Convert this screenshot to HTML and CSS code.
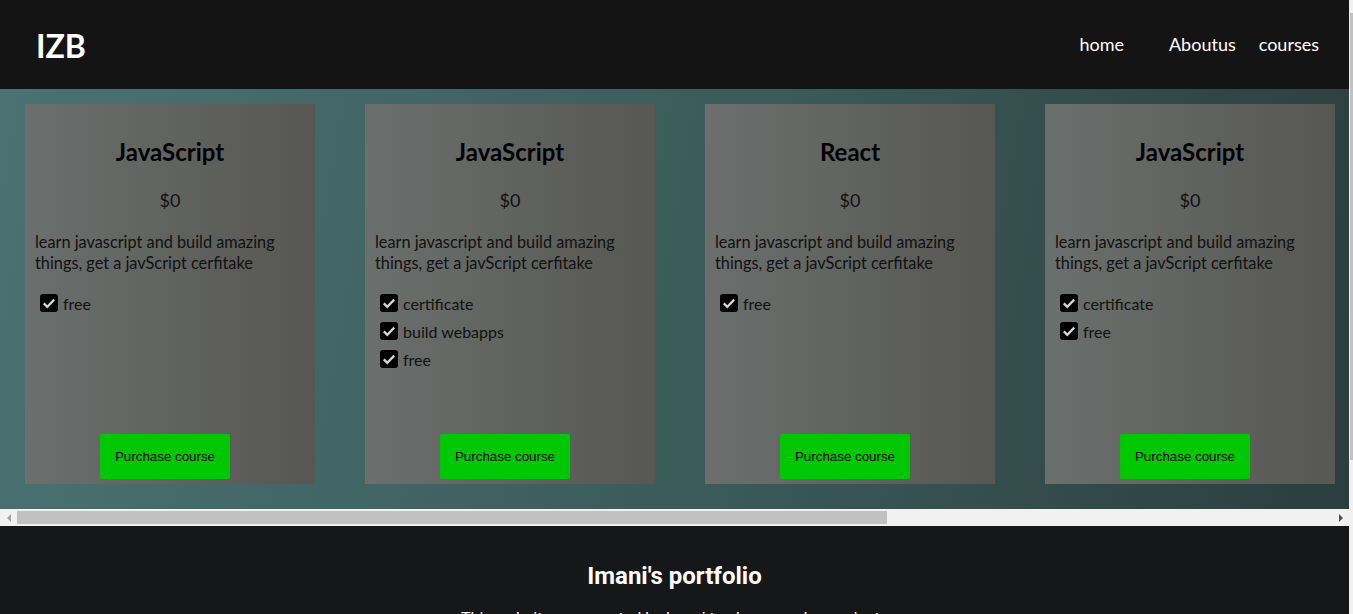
FILE: index.html
```html
<!DOCTYPE html>
<html lang="en">
<head>
<meta charset="utf-8">
<title>IZB</title>
<link rel="stylesheet" href="styles.css">
</head>
<body>
<div class="page">
  <header class="topbar">
    <div class="logo">IZB</div>
    <nav class="nav">
      <a class="nav-link nav-home" href="#">home</a>
      <a class="nav-link" href="#">Aboutus</a>
      <a class="nav-link" href="#">courses</a>
    </nav>
  </header>

  <section class="courses">
    <div class="track">
      <article class="card">
        <h2 class="card-title">JavaScript</h2>
        <div class="price">$0</div>
        <p class="desc">learn javascript and build amazing things, get a javScript cerfitake</p>
        <ul class="features">
          <li class="feature"><svg class="check" width="18" height="18" viewBox="0 0 18 18"><rect width="18" height="18" rx="3" fill="#000"/><path d="M3.8 9.4 L7.3 12.8 L14.2 5.6" fill="none" stroke="#d4d4d4" stroke-width="2.3"/></svg>free</li>
        </ul>
        <button class="buy">Purchase course</button>
      </article>
      <article class="card">
        <h2 class="card-title">JavaScript</h2>
        <div class="price">$0</div>
        <p class="desc">learn javascript and build amazing things, get a javScript cerfitake</p>
        <ul class="features">
          <li class="feature"><svg class="check" width="18" height="18" viewBox="0 0 18 18"><rect width="18" height="18" rx="3" fill="#000"/><path d="M3.8 9.4 L7.3 12.8 L14.2 5.6" fill="none" stroke="#d4d4d4" stroke-width="2.3"/></svg>certificate</li>
          <li class="feature"><svg class="check" width="18" height="18" viewBox="0 0 18 18"><rect width="18" height="18" rx="3" fill="#000"/><path d="M3.8 9.4 L7.3 12.8 L14.2 5.6" fill="none" stroke="#d4d4d4" stroke-width="2.3"/></svg>build webapps</li>
          <li class="feature"><svg class="check" width="18" height="18" viewBox="0 0 18 18"><rect width="18" height="18" rx="3" fill="#000"/><path d="M3.8 9.4 L7.3 12.8 L14.2 5.6" fill="none" stroke="#d4d4d4" stroke-width="2.3"/></svg>free</li>
        </ul>
        <button class="buy">Purchase course</button>
      </article>
      <article class="card">
        <h2 class="card-title">React</h2>
        <div class="price">$0</div>
        <p class="desc">learn javascript and build amazing things, get a javScript cerfitake</p>
        <ul class="features">
          <li class="feature"><svg class="check" width="18" height="18" viewBox="0 0 18 18"><rect width="18" height="18" rx="3" fill="#000"/><path d="M3.8 9.4 L7.3 12.8 L14.2 5.6" fill="none" stroke="#d4d4d4" stroke-width="2.3"/></svg>free</li>
        </ul>
        <button class="buy">Purchase course</button>
      </article>
      <article class="card">
        <h2 class="card-title">JavaScript</h2>
        <div class="price">$0</div>
        <p class="desc">learn javascript and build amazing things, get a javScript cerfitake</p>
        <ul class="features">
          <li class="feature"><svg class="check" width="18" height="18" viewBox="0 0 18 18"><rect width="18" height="18" rx="3" fill="#000"/><path d="M3.8 9.4 L7.3 12.8 L14.2 5.6" fill="none" stroke="#d4d4d4" stroke-width="2.3"/></svg>certificate</li>
          <li class="feature"><svg class="check" width="18" height="18" viewBox="0 0 18 18"><rect width="18" height="18" rx="3" fill="#000"/><path d="M3.8 9.4 L7.3 12.8 L14.2 5.6" fill="none" stroke="#d4d4d4" stroke-width="2.3"/></svg>free</li>
        </ul>
        <button class="buy">Purchase course</button>
      </article>
    </div>
  </section>

  <div class="hscroll">
    <div class="hs-btn"><span class="arrow-left"></span></div>
    <div class="hs-track"><div class="hs-thumb"></div></div>
    <div class="hs-btn"><span class="arrow-right"></span></div>
  </div>

  <footer class="footer">
    <h2 class="footer-title">Imani's portfolio</h2>
    <p class="footer-text">This website was created by Imani to showcase her projects</p>
  </footer>
</div>
<div class="vscroll"><div class="vs-thumb"></div></div>
</body>
</html>
```

FILE: styles.css
```css
* { box-sizing: border-box; }

html, body {
  margin: 0;
  height: 614px;
  overflow: hidden;
}

body {
  display: flex;
  background: #151719;
  font-family: Lato, "Noto Sans", sans-serif;
}

.page {
  flex: 0 0 1349px;
  width: 1349px;
  display: flex;
  flex-direction: column;
  overflow: hidden;
}

.vscroll {
  flex: 0 0 4px;
  background: #f1f1f1;
  padding-top: 13px;
  padding-left: 1px;
}

.vs-thumb {
  height: 447px;
  background: #c1c1c1;
}

/* header */
.topbar {
  flex: 0 0 89px;
  height: 89px;
  background: #141414;
  display: flex;
  align-items: center;
  justify-content: space-between;
  padding: 0 30px 0 36px;
}

.logo {
  color: #fff;
  font-size: 32px;
  font-weight: 700;
  line-height: 1;
  margin-top: 2px;
}

.nav {
  display: flex;
  gap: 23px;
  margin-bottom: 1px;
}

.nav-link {
  color: #fff;
  text-decoration: none;
  font-size: 18px;
}

.nav-home {
  margin-right: 22px;
}

/* courses */
.courses {
  flex: 0 0 420px;
  height: 420px;
  overflow: hidden;
  background: linear-gradient(100deg, #4a7272 0%, #3b5a5a 55%, #2c3e3e 100%);
}

.track {
  display: flex;
  gap: 50px;
  padding: 15px 25px 25px;
}

.card {
  flex: 0 0 290px;
  width: 290px;
  height: 380px;
  display: flex;
  flex-direction: column;
  padding: 0 10px 5px;
  background: linear-gradient(to right, #6b6f6d, #575753);
  color: #111;
}

.card-title {
  margin: 33px 0 0;
  font-size: 24px;
  font-weight: 700;
  line-height: 30px;
  text-align: center;
  color: #000;
}

.price {
  margin-top: 21px;
  font-size: 18px;
  line-height: 24px;
  text-align: center;
}

.desc {
  margin: 19px 0 0;
  font-size: 16.3px;
  line-height: 21px;
}

.features {
  list-style: none;
  margin: 16px 0 0 5px;
  padding: 0;
}

.feature {
  display: flex;
  align-items: center;
  gap: 5px;
  height: 28px;
  font-size: 16px;
}

.check {
  flex: none;
}

.buy {
  margin: auto 0 0 65px;
  width: 130px;
  height: 45px;
  border: 0;
  border-radius: 2px;
  background: #00c800;
  color: #000;
  font-family: "Liberation Sans", Arial, sans-serif;
  font-size: 13.33px;
  padding: 0;
}

/* horizontal scrollbar */
.hscroll {
  flex: 0 0 17px;
  height: 17px;
  display: flex;
  background: #f1f1f1;
}

.hs-btn {
  flex: 0 0 17px;
  display: flex;
  align-items: center;
  justify-content: center;
}

.arrow-left {
  width: 0;
  height: 0;
  border-top: 4px solid transparent;
  border-bottom: 4px solid transparent;
  border-right: 4px solid #a3a3a3;
}

.arrow-right {
  width: 0;
  height: 0;
  border-top: 4px solid transparent;
  border-bottom: 4px solid transparent;
  border-left: 4px solid #505050;
}

.hs-track {
  flex: 1;
  padding: 2px 0;
}

.hs-thumb {
  width: 870px;
  height: 13px;
  background: #c1c1c1;
}

/* footer */
.footer {
  flex: 1;
  background: #151719;
  color: #fff;
  text-align: center;
  font-family: Roboto, sans-serif;
  padding-top: 36px;
}

.footer-title {
  margin: 0;
  font-size: 24px;
  font-weight: 700;
  line-height: 28px;
}

.footer-text {
  margin: 19px 0 0;
  font-size: 16px;
  line-height: 20px;
}
```
